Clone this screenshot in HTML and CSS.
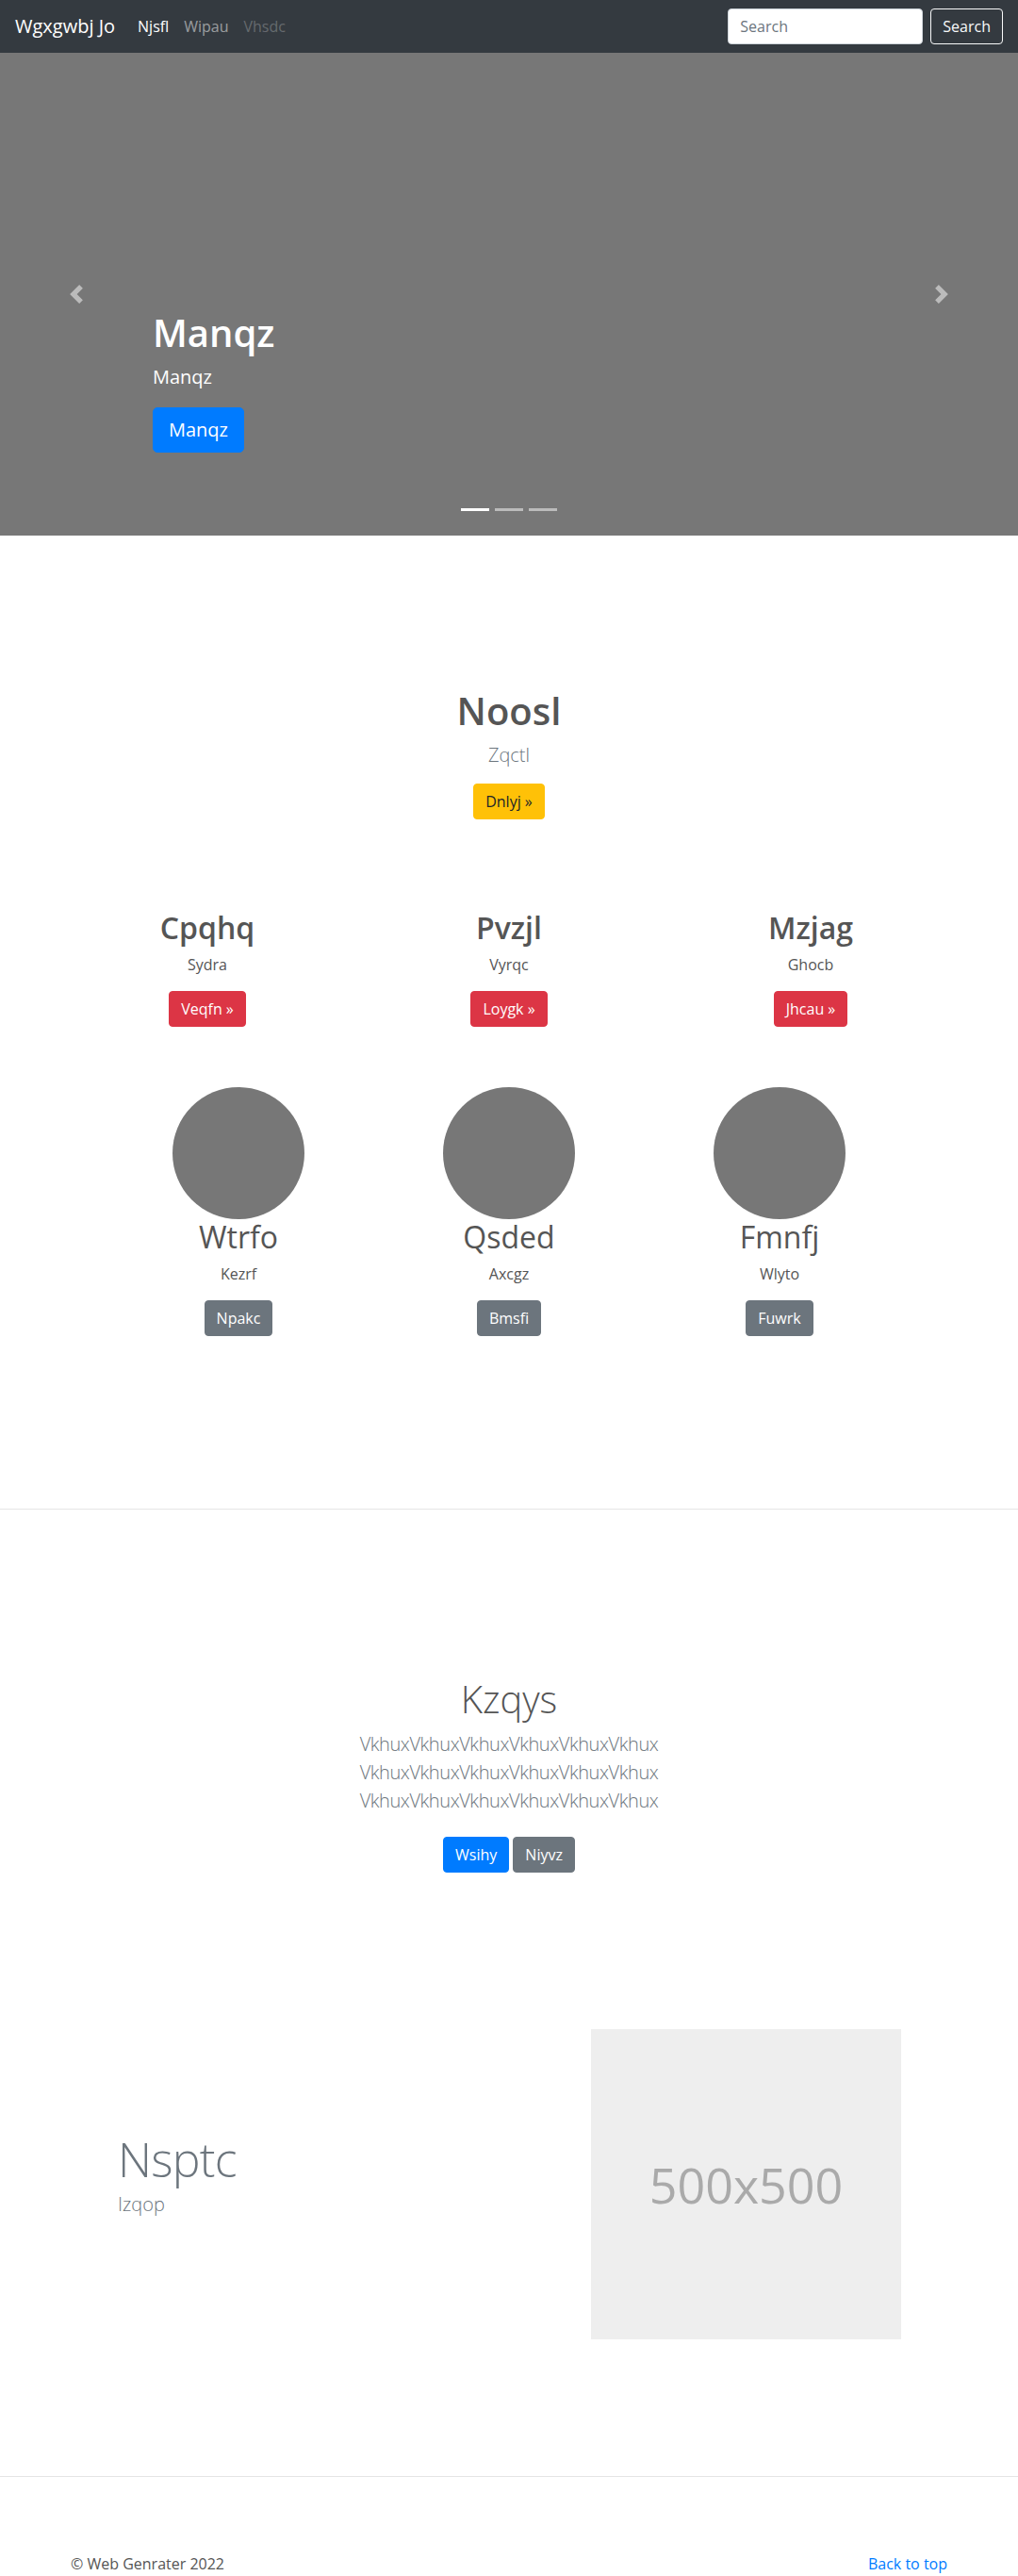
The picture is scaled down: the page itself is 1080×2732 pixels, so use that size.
FILE: index.html
```html
<!DOCTYPE html>
<html lang="en">
<head>
<meta charset="utf-8">
<title>Wgxgwbj Jo</title>
<link rel="stylesheet" href="styles.css">
</head>
<body>
<header class="navbar">
  <a class="brand" href="#">Wgxgwbj Jo</a>
  <nav class="nav">
    <a class="nav-link active" href="#">Njsfl</a>
    <a class="nav-link" href="#">Wipau</a>
    <a class="nav-link disabled" href="#">Vhsdc</a>
  </nav>
  <form class="search">
    <input class="search-input" type="text" placeholder="Search">
    <button class="btn btn-outline-light" type="button">Search</button>
  </form>
</header>

<section class="carousel">
  <a class="control control-prev" href="#">
    <svg class="control-icon" viewBox="0 0 8 8" width="20" height="20"><path fill="#fff" d="M5.25 0l-4 4 4 4 1.5-1.5L4.25 4l2.5-2.5L5.25 0z"/></svg>
  </a>
  <div class="caption">
    <h1 class="caption-title">Manqz</h1>
    <p class="caption-text">Manqz</p>
    <div class="caption-actions"><a class="btn btn-lg btn-primary" href="#">Manqz</a></div>
  </div>
  <a class="control control-next" href="#">
    <svg class="control-icon" viewBox="0 0 8 8" width="20" height="20"><path fill="#fff" d="M2.75 0l-1.5 1.5L3.75 4l-2.5 2.5L2.75 8l4-4-4-4z"/></svg>
  </a>
  <ol class="indicators">
    <li class="indicator active"></li>
    <li class="indicator"></li>
    <li class="indicator"></li>
  </ol>
</section>

<main>
  <section class="intro">
    <h2 class="intro-title">Noosl</h2>
    <p class="intro-lead">Zqctl</p>
    <div class="actions"><a class="btn btn-warning" href="#">Dnlyj &raquo;</a></div>
  </section>

  <section class="container cols">
    <div class="col">
      <h2 class="col-title">Cpqhq</h2>
      <p class="col-text">Sydra</p>
      <div class="actions"><a class="btn btn-danger" href="#">Veqfn &raquo;</a></div>
    </div>
    <div class="col">
      <h2 class="col-title">Pvzjl</h2>
      <p class="col-text">Vyrqc</p>
      <div class="actions"><a class="btn btn-danger" href="#">Loygk &raquo;</a></div>
    </div>
    <div class="col">
      <h2 class="col-title">Mzjag</h2>
      <p class="col-text">Ghocb</p>
      <div class="actions"><a class="btn btn-danger" href="#">Jhcau &raquo;</a></div>
    </div>
  </section>

  <section class="circles">
    <div class="circle-col">
      <div class="circle"></div>
      <h2 class="circle-title">Wtrfo</h2>
      <p class="col-text">Kezrf</p>
      <div class="actions"><a class="btn btn-secondary" href="#">Npakc</a></div>
    </div>
    <div class="circle-col">
      <div class="circle"></div>
      <h2 class="circle-title">Qsded</h2>
      <p class="col-text">Axcgz</p>
      <div class="actions"><a class="btn btn-secondary" href="#">Bmsfi</a></div>
    </div>
    <div class="circle-col">
      <div class="circle"></div>
      <h2 class="circle-title">Fmnfj</h2>
      <p class="col-text">Wlyto</p>
      <div class="actions"><a class="btn btn-secondary" href="#">Fuwrk</a></div>
    </div>
  </section>

  <hr class="divider divider-mid">

  <section class="banner">
    <h1 class="banner-title">Kzqys</h1>
    <p class="banner-lead">VkhuxVkhuxVkhuxVkhuxVkhuxVkhux VkhuxVkhuxVkhuxVkhuxVkhuxVkhux VkhuxVkhuxVkhuxVkhuxVkhuxVkhux</p>
    <div class="actions actions-pair">
      <a class="btn btn-primary" href="#">Wsihy</a>
      <a class="btn btn-secondary" href="#">Niyvz</a>
    </div>
  </section>

  <section class="container featurette">
    <div class="featurette-text">
      <h2 class="featurette-heading">Nsptc</h2>
      <p class="featurette-lead">Izqop</p>
    </div>
    <div class="placeholder">500x500</div>
  </section>

  <hr class="divider divider-end">
</main>

<footer class="container footer">
  <p class="footer-copy">&copy; Web Genrater 2022</p>
  <p class="footer-top"><a href="#">Back to top</a></p>
</footer>
</body>
</html>
```

FILE: styles.css
```css
* { box-sizing: border-box; }

html, body { margin: 0; }

body {
  font-family: "Open Sans", "Noto Sans", "DejaVu Sans", sans-serif;
  font-size: 16px;
  line-height: 1.5;
  color: #212529;
  background: #fff;
}

h1, h2, p { margin: 0; }

a { text-decoration: none; color: #007bff; }

/* Navbar */
.navbar {
  display: flex;
  align-items: center;
  height: 56px;
  padding: 8px 16px;
  background: #343a40;
}

.brand {
  font-size: 20px;
  line-height: 30px;
  padding: 5px 0;
  margin-right: 16px;
  color: #fff;
}

.nav { display: flex; }

.nav-link {
  padding: 8px;
  color: rgba(255, 255, 255, .5);
}

.nav-link.active { color: #fff; }
.nav-link.disabled { color: rgba(255, 255, 255, .25); }

.search {
  margin: 0 0 0 auto;
  display: flex;
}

.search-input {
  width: 207px;
  height: 38px;
  margin: 0 8px 0 0;
  padding: 6px 12px;
  font-family: inherit;
  font-size: 16px;
  line-height: 24px;
  color: #495057;
  background: #fff;
  border: 1px solid #ced4da;
  border-radius: 4px;
}

.search-input::placeholder { color: #6c757d; }

/* Buttons */
.btn {
  display: inline-block;
  font-family: inherit;
  font-size: 16px;
  font-weight: 400;
  line-height: 24px;
  padding: 6px 12px;
  border: 1px solid transparent;
  border-radius: 4px;
  text-align: center;
  white-space: nowrap;
}

.btn-lg {
  font-size: 20px;
  line-height: 30px;
  padding: 8px 16px;
  border-radius: 5px;
}

.btn-outline-light { color: #f8f9fa; border-color: #f8f9fa; background: transparent; }
.btn-primary { color: #fff; background: #007bff; border-color: #007bff; }
.btn-secondary { color: #fff; background: #6c757d; border-color: #6c757d; }
.btn-warning { color: #212529; background: #ffc107; border-color: #ffc107; }
.btn-danger { color: #fff; background: #dc3545; border-color: #dc3545; }

.actions {
  display: flex;
  justify-content: center;
}

.actions-pair { gap: 4px; }

/* Carousel */
.carousel {
  position: relative;
  height: 512px;
  background: #777;
}

.caption {
  position: absolute;
  left: 15%;
  right: 15%;
  bottom: 48px;
  padding: 20px 0;
  color: #fff;
  text-align: left;
}

.caption-title {
  font-size: 40px;
  font-weight: 600;
  line-height: 48px;
  margin-bottom: 8px;
}

.caption-text {
  font-size: 20px;
  line-height: 30px;
  margin-bottom: 17px;
}

.caption-actions {
  display: flex;
  margin-bottom: 20px;
}

.control {
  position: absolute;
  top: 0;
  bottom: 0;
  width: 15%;
  display: flex;
  align-items: center;
  justify-content: center;
  opacity: .5;
}

.control-prev { left: 0; }
.control-next { right: 0; }

.control-icon { display: block; width: 20px; height: 20px; }

.indicators {
  position: absolute;
  left: 0;
  right: 0;
  bottom: 0;
  margin: 0 0 16px;
  padding: 0;
  list-style: none;
  display: flex;
  justify-content: center;
}

.indicator {
  width: 30px;
  height: 3px;
  margin: 10px 3px;
  background: #fff;
  opacity: .5;
}

.indicator.active { opacity: 1; }

/* Intro */
.intro {
  padding-top: 162px;
  text-align: center;
}

.intro-title {
  font-size: 40px;
  font-weight: 600;
  line-height: 48px;
  color: #555;
  margin-bottom: 8px;
}

.intro-lead {
  font-size: 20px;
  font-weight: 300;
  line-height: 30px;
  color: #6c757d;
  margin-bottom: 15px;
}

/* Containers */
.container {
  width: 960px;
  margin: 0 auto;
  padding: 0 15px;
}

.cols {
  display: grid;
  grid-template-columns: repeat(3, 1fr);
  padding: 0;
  margin-top: 96px;
  text-align: center;
}

.col { padding: 0 15px; }

.col-title {
  font-size: 32px;
  font-weight: 600;
  line-height: 38px;
  color: #555;
  margin-bottom: 8px;
}

.col-text {
  color: #555;
  margin-bottom: 16px;
}

.circles {
  width: 861px;
  margin: 64px auto 0;
  display: grid;
  grid-template-columns: repeat(3, 1fr);
  text-align: center;
}

.circle {
  width: 140px;
  height: 140px;
  margin: 0 auto;
  border-radius: 50%;
  background: #777;
}

.circle-title {
  font-size: 32px;
  font-weight: 400;
  line-height: 38px;
  color: #555;
  margin-bottom: 8px;
}

/* Dividers */
.divider {
  height: 0;
  margin: 0;
  border: 0;
  border-top: 1px solid rgba(0, 0, 0, .1);
}

.divider-mid { margin-top: 183px; }
.divider-end { margin-top: 145px; }

/* Banner */
.banner {
  margin-top: 177px;
  text-align: center;
}

.banner-title {
  font-size: 40px;
  font-weight: 300;
  line-height: 48px;
  color: #555;
  margin-bottom: 9px;
}

.banner-lead {
  width: 480px;
  margin: 0 auto 23px;
  font-size: 20px;
  font-weight: 300;
  line-height: 30px;
  letter-spacing: -0.4px;
  color: #6c757d;
}

/* Featurette */
.featurette {
  margin-top: 166px;
  display: grid;
  grid-template-columns: 1fr 329px;
  align-items: center;
  padding: 0 64px 0 65px;
}

.featurette-heading {
  font-size: 50px;
  font-weight: 300;
  line-height: 1;
  letter-spacing: -0.8px;
  color: #6c757d;
  margin-bottom: 8px;
}

.featurette-lead {
  font-size: 20px;
  font-weight: 300;
  line-height: 30px;
  color: #6c757d;
  margin-bottom: 16px;
}

.placeholder {
  width: 329px;
  height: 329px;
  display: flex;
  align-items: center;
  justify-content: center;
  background: #eee;
  color: #aaa;
  font-size: 52px;
  line-height: 1;
}

/* Footer */
.footer {
  display: flex;
  justify-content: space-between;
  margin-top: 80px;
}

.footer-copy { color: #555; }
```
